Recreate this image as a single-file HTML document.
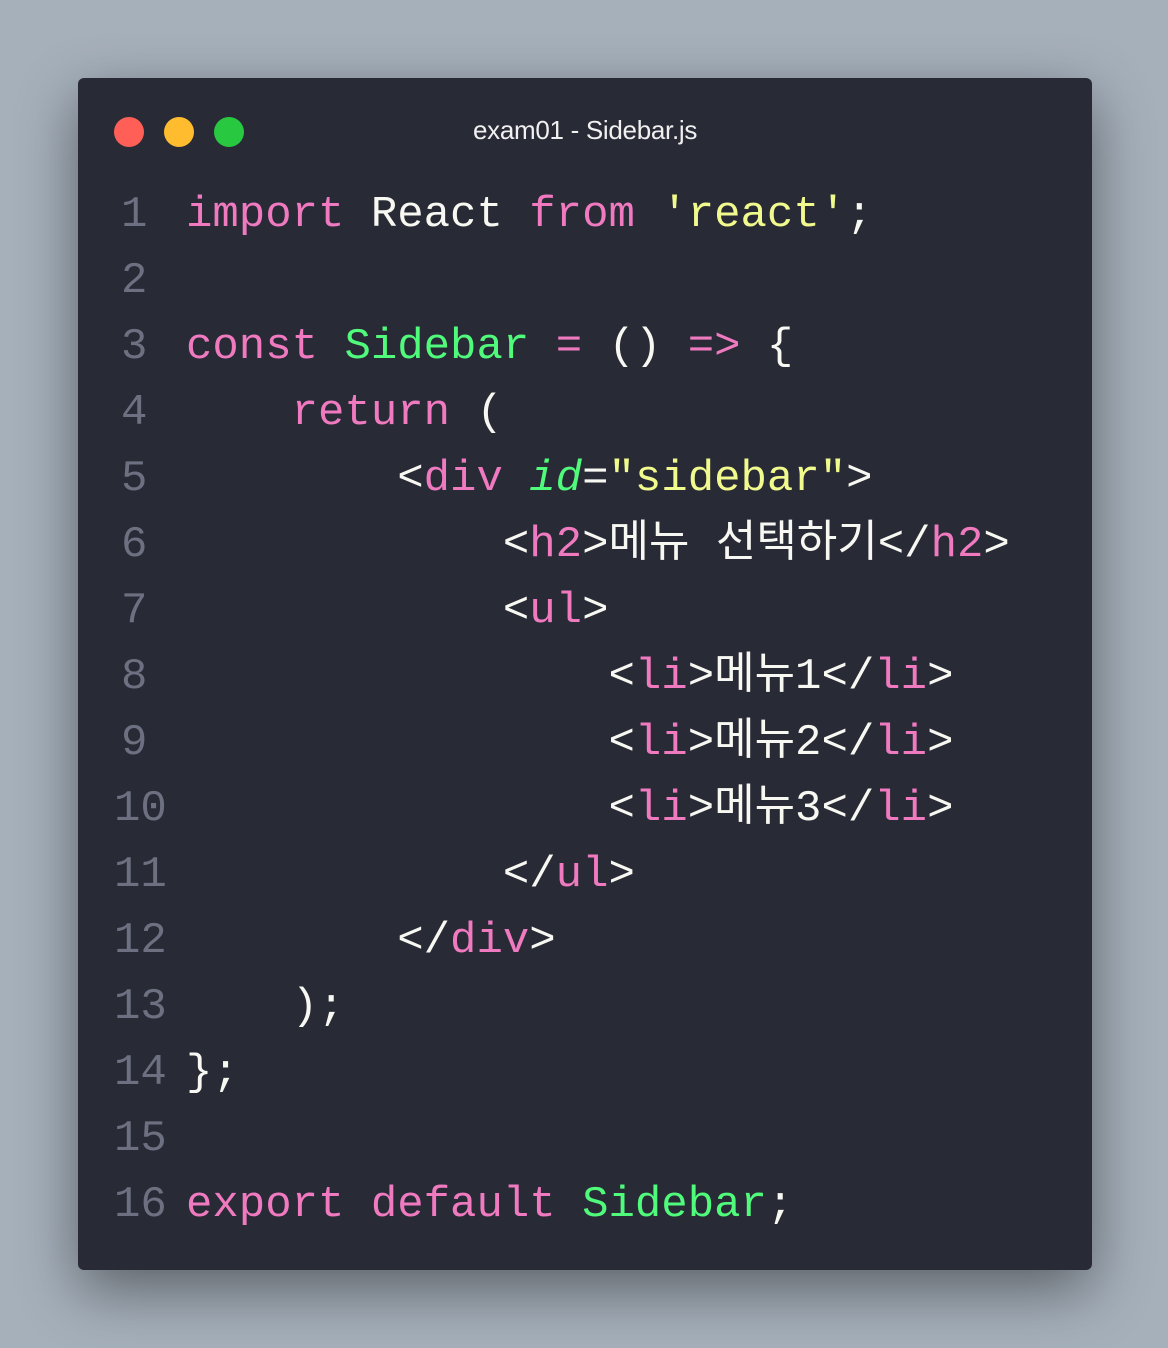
<!DOCTYPE html>
<html><head><meta charset="utf-8"><style>
body{margin:0;width:1168px;height:1348px;background:#a6b0bb;position:relative;overflow:hidden}
.win{position:absolute;left:78px;top:78px;width:1014px;height:1192px;background:#282a36;border-radius:6px;box-shadow:0 20px 60px rgba(0,0,0,.45)}
.dot{position:absolute;top:39px;width:30px;height:30px;border-radius:50%}
.title{position:absolute;top:37px;left:0;width:1014px;text-align:center;color:#f0f0f0;font:26px "Liberation Sans",sans-serif;letter-spacing:-0.3px}
.code{position:absolute;left:0;top:104px;width:1014px;height:1056px;font:44px/66px "Liberation Mono","Noto Sans CJK KR",monospace;color:#f8f8f2;white-space:pre}
.ln{position:absolute;color:#6c7080}
.s{left:43px}.d{left:36px}
.l{position:absolute;left:108px}
.k{color:#f07ac0}.g{color:#50fa7b}.y{color:#f1fa8c}.i{color:#50fa7b;font-style:italic}
</style></head><body>
<div class="win">
<div class="dot" style="left:36px;background:#ff5f57"></div>
<div class="dot" style="left:86px;background:#febc2e"></div>
<div class="dot" style="left:136px;background:#28c840"></div>
<div class="title">exam01 - Sidebar.js</div>
<div class="code"><div class="ln s" style="top:0">1</div><div class="l" style="top:0"><span class="k">import</span> React <span class="k">from</span> <span class="y">'react'</span>;</div><div class="ln s" style="top:66px">2</div><div class="ln s" style="top:132px">3</div><div class="l" style="top:132px"><span class="k">const</span> <span class="g">Sidebar</span> <span class="k">=</span> () <span class="k">=&gt;</span> {</div><div class="ln s" style="top:198px">4</div><div class="l" style="top:198px">    <span class="k">return</span> (</div><div class="ln s" style="top:264px">5</div><div class="l" style="top:264px">        &lt;<span class="k">div</span> <span class="i">id</span>=<span class="y">"sidebar"</span>&gt;</div><div class="ln s" style="top:330px">6</div><div class="l" style="top:330px">            &lt;<span class="k">h2</span>&gt;메뉴 선택하기&lt;/<span class="k">h2</span>&gt;</div><div class="ln s" style="top:396px">7</div><div class="l" style="top:396px">            &lt;<span class="k">ul</span>&gt;</div><div class="ln s" style="top:462px">8</div><div class="l" style="top:462px">                &lt;<span class="k">li</span>&gt;메뉴1&lt;/<span class="k">li</span>&gt;</div><div class="ln s" style="top:528px">9</div><div class="l" style="top:528px">                &lt;<span class="k">li</span>&gt;메뉴2&lt;/<span class="k">li</span>&gt;</div><div class="ln d" style="top:594px">10</div><div class="l" style="top:594px">                &lt;<span class="k">li</span>&gt;메뉴3&lt;/<span class="k">li</span>&gt;</div><div class="ln d" style="top:660px">11</div><div class="l" style="top:660px">            &lt;/<span class="k">ul</span>&gt;</div><div class="ln d" style="top:726px">12</div><div class="l" style="top:726px">        &lt;/<span class="k">div</span>&gt;</div><div class="ln d" style="top:792px">13</div><div class="l" style="top:792px">    );</div><div class="ln d" style="top:858px">14</div><div class="l" style="top:858px">};</div><div class="ln d" style="top:924px">15</div><div class="ln d" style="top:990px">16</div><div class="l" style="top:990px"><span class="k">export</span> <span class="k">default</span> <span class="g">Sidebar</span>;</div></div>
</div>
</body></html>
